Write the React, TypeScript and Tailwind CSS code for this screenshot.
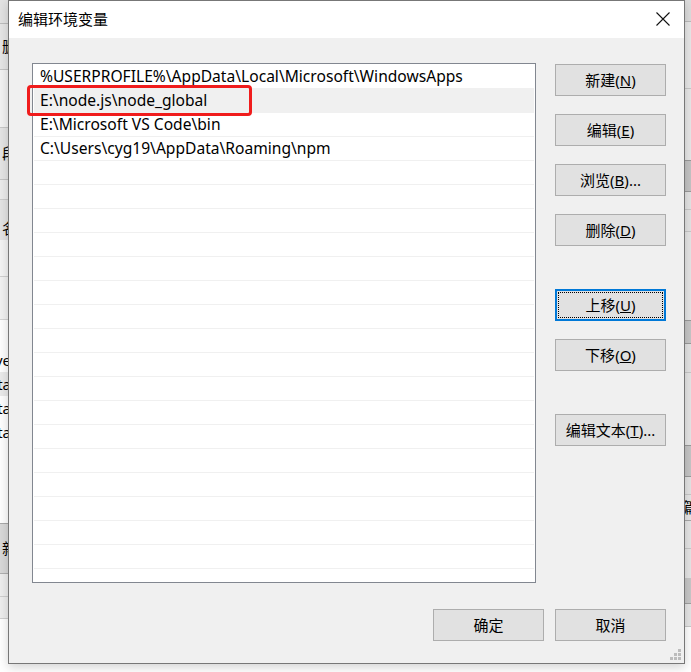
import React from 'react'

const font = "font-['Noto_Sans','Noto_Sans_CJK_SC',sans-serif]"

const paths = [
  '%USERPROFILE%\\AppData\\Local\\Microsoft\\WindowsApps',
  'E:\\node.js\\node_global',
  'E:\\Microsoft VS Code\\bin',
  'C:\\Users\\cyg19\\AppData\\Roaming\\npm',
]

const rowCount = 21

function Btn({ label, hot, tail = '', focused = false }: { label: string; hot: string; tail?: string; focused?: boolean }) {
  return (
    <button
      className={`w-[111px] h-[32px] flex items-center justify-center text-[15px] text-black bg-[#e1e1e1] ${
        focused ? 'border-2 border-[#0078d7] p-[1px]' : 'border border-[#adadad]'
      }`}
    >
      <span
        className={`w-full h-full flex items-center justify-center ${
          focused ? 'outline-1 outline-dotted outline-black -outline-offset-1' : ''
        }`}
      >
        {label}(<u>{hot}</u>){tail}
      </span>
    </button>
  )
}

function PlainBtn({ label }: { label: string }) {
  return (
    <button className="w-[111px] h-[32px] flex items-center justify-center text-[15px] text-black bg-[#e1e1e1] border border-[#adadad]">
      {label}
    </button>
  )
}

function LeftStrip() {
  return (
    <div className="w-[8px] h-full flex flex-col text-[15px] leading-none overflow-hidden text-black">
      <div className="h-[24px] bg-[#e3e3e3] border-b border-[#bdbdbd]" />
      <div className="h-[46px] bg-[#e6e6e6] border-b border-[#c4c4c4] flex items-center justify-end">
        <span className="-mr-[9px]">删</span>
      </div>
      <div className="h-[58px] bg-[#f3f3f3] border-b border-[#c8c8c8]" />
      <div className="h-[52px] bg-[#e5e5e5] border-b border-[#c4c4c4] flex items-center justify-end">
        <span className="-mr-[9px]">段</span>
      </div>
      <div className="h-[20px] bg-[#ececec] border-b border-[#cccccc]" />
      <div className="h-[40px] bg-[#e4e4e4] flex items-end justify-end pb-[4px]">
        <span className="-mr-[9px]">名</span>
      </div>
      <div className="h-[37px] bg-[#f4f4f4] border-b border-[#d0d0d0]" />
      <div className="h-[43px] bg-[#f2f2f2] border-b border-[#d4d4d4]" />
      <div className="h-[28px] bg-white" />
      <div className="h-[24px] bg-white flex items-center justify-end"><span className="-mr-[3px]">ve</span></div>
      <div className="h-[24px] bg-[#ebebeb] flex items-center justify-end"><span className="-mr-[3px]">ta</span></div>
      <div className="h-[24px] bg-white flex items-center justify-end"><span className="-mr-[3px]">ta</span></div>
      <div className="h-[24px] bg-white flex items-center justify-end"><span className="-mr-[3px]">ta</span></div>
      <div className="h-[80px] bg-white border-b border-[#a9a9a9]" />
      <div className="h-[50px] bg-[#d9d9d9] border-b border-[#b0b0b0] flex items-center justify-end">
        <span className="-mr-[9px]">新</span>
      </div>
      <div className="h-[23px] bg-[#eeeeee] border-b border-[#cfcfcf]" />
      <div className="h-[22px] bg-[#eeeeee] border-b border-[#cfcfcf]" />
      <div className="flex-1 bg-white" />
    </div>
  )
}

function RightStrip() {
  return (
    <div className="w-[6px] h-full flex flex-col overflow-hidden text-[15px] leading-none">
      <div className="h-[22px] bg-[#dddddd] border-b border-[#bbbbbb]" />
      <div className="h-[67px] bg-[#e8e8e8] border-b border-[#c8c8c8]" />
      <div className="h-[71px] bg-[#e8e8e8]" />
      <div className="h-[32px] bg-[#c4c4c4] border-y border-[#9a9a9a]" />
      <div className="h-[18px] bg-[#e4e4e4] border-b border-[#c8c8c8]" />
      <div className="h-[22px] bg-[#e4e4e4] border-b border-[#c8c8c8]" />
      <div className="h-[88px] bg-[#e6e6e6]" />
      <div className="h-[24px] bg-[#c6c6c6] border-y border-[#9a9a9a]" />
      <div className="h-[29px] bg-[#e4e4e4] border-b border-[#c8c8c8]" />
      <div className="h-[72px] bg-[#e6e6e6]" />
      <div className="h-[32px] bg-[#c6c6c6] border-y border-[#9a9a9a]" />
      <div className="h-[18px] bg-[#e4e4e4] border-b border-[#c8c8c8]" />
      <div className="h-[26px] bg-[#e6e6e6] border-b border-[#a8a8a8] flex items-center">
        <span className="-ml-[2px]">篇</span>
      </div>
      <div className="h-[28px] bg-[#e6e6e6] border-b border-[#c8c8c8]" />
      <div className="h-[30px] bg-[#e6e6e6] border-b border-[#c8c8c8]" />
      <div className="h-[25px] bg-[#c8c8c8] border-b border-[#a0a0a0]" />
      <div className="h-[23px] bg-[#e6e6e6] border-b border-[#c8c8c8]" />
      <div className="flex-1 bg-white" />
    </div>
  )
}

function ResizeGrip() {
  return (
    <svg width="11" height="11" viewBox="0 0 11 11" className="absolute right-[3px] bottom-[3px]">
      {[
        [8, 0],
        [4, 4],
        [8, 4],
        [0, 8],
        [4, 8],
        [8, 8],
      ].map(([x, y], i) => (
        <rect key={i} x={x} y={y} width="3" height="3" fill="#bcbcbc" />
      ))}
    </svg>
  )
}

export default function App() {
  return (
    <div className={`w-[691px] h-[672px] bg-white flex overflow-hidden ${font}`}>
      <LeftStrip />
      <div className="w-[677px] h-[664px] relative z-10 flex flex-col border border-[#777777] bg-[#f0f0f0] shadow-[0_3px_10px_rgba(0,0,0,0.18)]">
        {/* title bar */}
        <div className="h-[37px] bg-white flex items-center justify-between pl-[9px] pr-[14px]">
          <span className="text-[15px] text-black leading-none -mt-[1px]">编辑环境变量</span>
          <svg width="14" height="14" viewBox="0 0 14 14" className="-mt-[1px]">
            <path d="M0.5 0.5 L13.5 13.5 M13.5 0.5 L0.5 13.5" stroke="#111" strokeWidth="1.1" />
          </svg>
        </div>

        {/* body */}
        <div className="flex-1 relative flex flex-col pl-[23px] pr-[17px] pt-[25px]">
          <div className="flex">
            <div className="w-[504px] h-[520px] bg-white border border-[#828790] p-[1px] overflow-hidden">
              {Array.from({ length: rowCount }).map((_, i) => (
                <div
                  key={i}
                  className={`h-[24px] flex items-center pl-[6px] pt-[1px] border-b border-[#f0f0f0] text-[15.6px] text-black whitespace-nowrap ${
                    i === 1 ? 'bg-[#f0f0f0]' : ''
                  }`}
                >
                  {paths[i] ?? ''}
                </div>
              ))}
            </div>

            <div className="ml-[19px] pt-[1px] flex flex-col">
              <div className="flex flex-col gap-[18px]">
                <Btn label="新建" hot="N" />
                <Btn label="编辑" hot="E" />
                <Btn label="浏览" hot="B" tail="..." />
                <Btn label="删除" hot="D" />
              </div>
              <div className="flex flex-col gap-[18px] mt-[43px]">
                <Btn label="上移" hot="U" focused />
                <Btn label="下移" hot="O" />
              </div>
              <div className="mt-[43px]">
                <Btn label="编辑文本" hot="T" tail="..." />
              </div>
            </div>
          </div>

          <div className="flex justify-end gap-[11px] mt-[26px] mr-[1px]">
            <PlainBtn label="确定" />
            <PlainBtn label="取消" />
          </div>

          {/* highlight box drawn over the list */}
          <div className="absolute left-[18px] top-[47px] w-[225px] h-[31px] border-[3px] border-[#f01c1c] rounded-[4px]" />

          <ResizeGrip />
        </div>
      </div>
      <RightStrip />
    </div>
  )
}
